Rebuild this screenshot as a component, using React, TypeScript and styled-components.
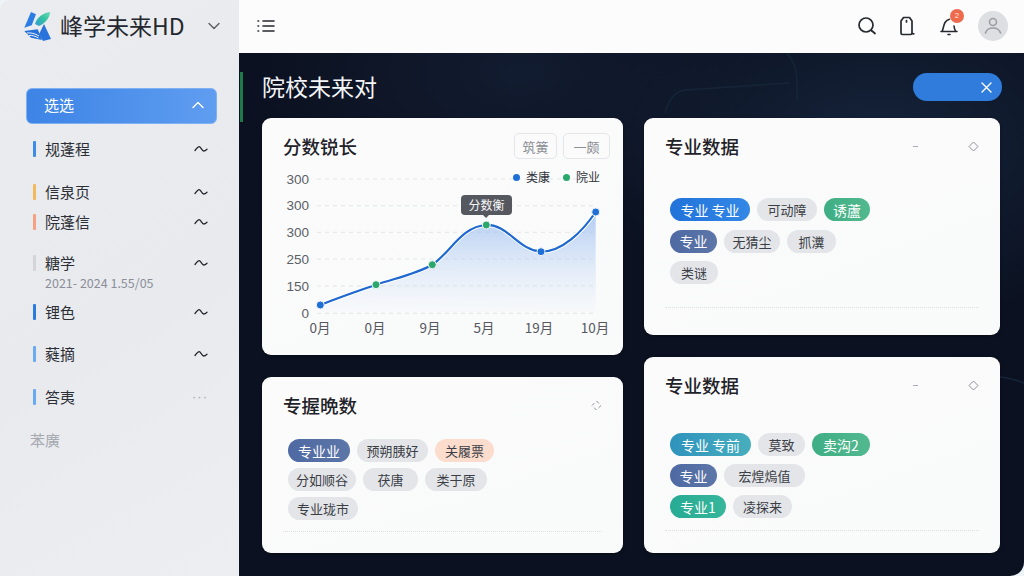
import * as React from "react";
import styled, { createGlobalStyle } from "styled-components";

const GlobalStyle = createGlobalStyle`
  html, body {
    margin: 0;
    width: 1024px;
    height: 576px;
    overflow: hidden;
    background: #eef3f8;
    font-family: "Noto Sans CJK SC", "Noto Sans", sans-serif;
  }
`;

const Shell = styled.div`
  width: 1024px;
  height: 576px;
  display: flex;
  overflow: hidden;
  border-radius: 10px 0 14px 0;
`;

const Sidebar = styled.aside`
  width: 239px;
  flex: none;
  display: flex;
  flex-direction: column;
  background: linear-gradient(150deg, #ebecf0 0%, #e8eaee 55%, #eceef2 100%);
`;

const Brand = styled.div`
  height: 52px;
  display: flex;
  align-items: center;
  padding: 0 18px 0 22px;
`;

const BrandName = styled.span`
  margin: -2px 0 0 6px;
  font-size: 23px;
  line-height: 28px;
  color: #24272e;
  white-space: nowrap;
  flex: 1;
`;

const Nav = styled.nav`
  margin-top: 36px;
  padding: 0 22px 0 26px;
  display: flex;
  flex-direction: column;
`;

const ActiveItem = styled.div`
  height: 36px;
  box-sizing: border-box;
  display: flex;
  align-items: center;
  justify-content: space-between;
  padding: 0 11px 3px 17px;
  border-radius: 6px;
  border: 1px solid #7fb0f2;
  background: linear-gradient(90deg, #3d84e6 0%, #5f9df0 100%);
  color: #ffffff;
  font-size: 15px;
`;

const NavRow = styled.div<{ $top: number }>`
  height: 24px;
  margin: ${(p) => p.$top}px 0 0 7px;
  padding-right: 9px;
  display: flex;
  align-items: center;
  font-size: 15px;
  color: #2c2f36;
`;

const Marker = styled.i<{ $color: string }>`
  width: 3px;
  height: 16px;
  margin-right: 9px;
  border-radius: 1px;
  background: ${(p) => p.$color};
`;

const NavLabel = styled.span`
  flex: 1;
  margin-top: -2px;
`;

const NavSub = styled.div`
  height: 16px;
  margin-left: 19px;
  font-size: 12.5px;
  line-height: 16px;
  color: #8b8e98;
  white-space: nowrap;
`;

const NavMuted = styled.div`
  height: 24px;
  margin: 20px 0 0 4px;
  font-size: 15px;
  line-height: 22px;
  color: #a6a9b0;
`;

const Dots = styled.span`
  font-family: "Liberation Sans", sans-serif;
  font-size: 13px;
  letter-spacing: 1px;
  line-height: 10px;
  color: #a2a5ac;
`;

const Right = styled.div`
  flex: 1;
  min-width: 0;
  display: flex;
  flex-direction: column;
`;

const Topbar = styled.header`
  height: 53px;
  flex: none;
  box-sizing: border-box;
  display: flex;
  align-items: center;
  padding: 0 16px 1px 18px;
  background: #fcfcfc;
`;

const TopActions = styled.div`
  margin-left: auto;
  display: flex;
  align-items: center;
  gap: 21px;
`;

const BellWrap = styled.span`
  position: relative;
  display: flex;
  margin-left: 3px;
`;

const Badge = styled.i`
  position: absolute;
  top: -7px;
  left: 10px;
  width: 14px;
  height: 14px;
  border-radius: 50%;
  background: #ee6a4d;
  color: #fde3da;
  font: 8px/14px "Liberation Sans", sans-serif;
  text-align: center;
`;

const Avatar = styled.span`
  width: 30px;
  height: 30px;
  margin-left: -1px;
  border-radius: 50%;
  display: flex;
  align-items: center;
  justify-content: center;
  background: #dedfe3;
`;

const Main = styled.main`
  position: relative;
  flex: 1;
  min-height: 0;
  overflow: hidden;
  box-sizing: border-box;
  padding: 20px 23px 0;
  background:
    radial-gradient(ellipse 300px 180px at 640px 90px, #15233a 0%, rgba(21, 35, 58, 0) 100%),
    radial-gradient(ellipse 260px 150px at 280px 20px, #121c30 0%, rgba(18, 28, 48, 0) 100%),
    #0b1120;
`;

const AccentBar = styled.i`
  position: absolute;
  left: 1px;
  top: 19px;
  width: 3px;
  height: 50px;
  background: #1d7a4b;
`;

const Backdrop = styled.svg`
  position: absolute;
  left: 0;
  top: 0;
  pointer-events: none;
`;

const PageHead = styled.div`
  position: relative;
  height: 30px;
  margin-bottom: 15px;
  display: flex;
  align-items: center;
  justify-content: space-between;
`;

const PageTitle = styled.h1`
  margin: -4px 0 0;
  font-size: 23px;
  font-weight: 400;
  color: #f2f4f7;
`;

const BluePill = styled.button`
  width: 89px;
  height: 28px;
  margin: -2px -1px 0 0;
  padding: 0 10px 0 0;
  border: 0;
  border-radius: 14px;
  display: flex;
  align-items: center;
  justify-content: flex-end;
  background: #2f7cdd;
`;

const Board = styled.div`
  position: relative;
  display: grid;
  grid-template-columns: 361px 356px;
  column-gap: 21px;
`;

const Column = styled.div`
  display: flex;
  flex-direction: column;
  gap: 22px;
`;

const Card = styled.section<{ $height: number }>`
  height: ${(p) => p.$height}px;
  box-sizing: border-box;
  padding: 0 21px;
  display: flex;
  flex-direction: column;
  border-radius: 9px;
  background: linear-gradient(160deg, #fbfbfc 0%, #f9fafa 100%);
  box-shadow: 0 1px 3px rgba(0, 0, 0, 0.35);
`;

const CardHead = styled.div`
  height: 28px;
  padding-top: 14px;
  flex: none;
  display: flex;
  align-items: center;
`;

const CardTitle = styled.h2`
  margin: -1px auto 0 0;
  font-size: 18.5px;
  font-weight: 500;
  line-height: 28px;
  color: #1f2228;
`;

const GhostButtons = styled.div`
  display: flex;
  gap: 6px;
  margin-right: -8px;
`;

const GhostButton = styled.button<{ $width: number }>`
  width: ${(p) => p.$width}px;
  height: 26px;
  padding: 0;
  border: 1px solid #e4e6ea;
  border-radius: 5px;
  background: #fbfbfc;
  font: inherit;
  font-size: 13px;
  color: #8b8e94;
`;

const Dash = styled.i`
  width: 5px;
  height: 1px;
  margin-right: 50px;
  background: #a9acb2;
`;

const Chart = styled.div`
  position: relative;
  width: 340px;
  height: 172px;
  margin: 8px 0 0 -11px;
`;

const Legend = styled.div`
  position: absolute;
  top: 0;
  left: 241px;
  display: flex;
  gap: 13px;
  font-size: 12px;
  line-height: 18px;
  color: #33363c;
`;

const LegendItem = styled.span<{ $color: string }>`
  display: flex;
  align-items: center;
  gap: 6px;
  &::before {
    content: "";
    width: 7px;
    height: 7px;
    border-radius: 50%;
    background: ${(p) => p.$color};
  }
`;

const Tooltip = styled.div`
  position: absolute;
  left: 189px;
  top: 27px;
  width: 51px;
  height: 20px;
  border-radius: 4px;
  background: #55585f;
  color: #f5f5f6;
  font-size: 12px;
  line-height: 20px;
  text-align: center;
  &::after {
    content: "";
    position: absolute;
    left: 22px;
    bottom: -3px;
    border: 3px solid transparent;
    border-bottom: 0;
    border-top-color: #55585f;
  }
`;

const Tags = styled.div<{ $top: number; $gap: number }>`
  margin: ${(p) => p.$top}px 0 0 5px;
  display: flex;
  flex-direction: column;
  gap: ${(p) => p.$gap}px;
`;

const TagRow = styled.div`
  display: flex;
  gap: 7px;
`;

type Tone = "blue" | "slate" | "green" | "teal" | "mint" | "peach" | "gray";

const toneBg: Record<Tone, string> = {
  blue: "linear-gradient(90deg, #2273da, #3388e6)",
  slate: "linear-gradient(90deg, #4f6aa3, #5c76a8)",
  green: "linear-gradient(90deg, #3fae84, #52b98f)",
  teal: "linear-gradient(90deg, #2f93bd, #47aebd)",
  mint: "linear-gradient(90deg, #27ab94, #37b69b)",
  peach: "#fbdccd",
  gray: "#e3e5e9",
};

const Tag = styled.span<{ $tone: Tone; $width: number }>`
  width: ${(p) => p.$width}px;
  height: 23px;
  border-radius: 12px;
  display: flex;
  align-items: center;
  justify-content: center;
  white-space: nowrap;
  font-size: ${(p) => (p.$tone === "gray" || p.$tone === "peach" ? 13 : 14)}px;
  background: ${(p) => toneBg[p.$tone]};
  color: ${(p) => (p.$tone === "gray" || p.$tone === "peach" ? "#3b3e45" : "#ffffff")};
`;

const Rule = styled.hr<{ $bottom: number }>`
  width: 100%;
  margin: auto 0 ${(p) => p.$bottom}px;
  border: 0;
  border-top: 1px dotted #dcdee2;
`;

const NextTitle = styled.div<{ $inset: number; $color: string }>`
  height: 24px;
  margin: -4px 0 0 ${(p) => p.$inset}px;
  font-size: 18px;
  font-weight: 500;
  color: ${(p) => p.$color};
`;

const Caret = () => (
  <svg width="14" height="10" viewBox="0 0 14 10" fill="none" stroke="#25282e" strokeWidth="1.3" strokeLinecap="round">
    <path d="M1 6.500C2.500 4.500 4 2.600 5.200 2.600 6.600 2.600 8 7 9.600 7 10.800 7 12 6.200 13 5.200" />
  </svg>
);

const Chevron = ({ up, color }: { up?: boolean; color: string }) => (
  <svg width="14" height="8" viewBox="0 0 14 8" fill="none" stroke={color} strokeWidth="1.4" strokeLinecap="round" strokeLinejoin="round">
    <path d={up ? "M2 6.500 7 1.500l5 5" : "M2 1.500l5 5 5-5"} />
  </svg>
);

const Logo = () => (
  <svg width="32" height="32" viewBox="0 -1 32 32">
    <defs>
      <linearGradient id="leafFill" x1="0" y1="1" x2="1" y2="0">
        <stop offset="0" stopColor="#2f9bd8" />
        <stop offset="0.55" stopColor="#35c2a0" />
        <stop offset="1" stopColor="#6bdcb8" />
      </linearGradient>
    </defs>
    <path d="M9 1 14 3.300 9.700 14.300 2.300 16.700Z" fill="#2b7de4" />
    <path d="M13 13C15 6 21 2 28 1 28 6 24 12 17 15Z" fill="url(#leafFill)" />
    <path d="M22 13 29 28 21 30 17 23.300Z" fill="#2a73dc" />
    <path d="M2.300 20 15.700 18.300 20 29 9 26.700Z" fill="#2470d8" />
    <path d="M5 22C9 21.500 13 22.500 17 25M7 24.500C10 24 13 25 16.500 27" fill="none" stroke="#eef3fb" strokeWidth="1" />
  </svg>
);

const ListIcon = () => (
  <svg width="18" height="14" viewBox="0 0 18 14" fill="none" stroke="#26292f" strokeWidth="1.6" strokeLinecap="round">
    <path d="M6 2h11M6 7h11M6 12h11M1 2h.6M1 7h.6M1 12h.6" />
  </svg>
);

const SearchIcon = () => (
  <svg width="20" height="20" viewBox="0 0 20 20" fill="none" stroke="#26292f" strokeWidth="1.7" strokeLinecap="round">
    <circle cx="9" cy="9" r="7" />
    <path d="M14.500 14.500l3.500 3" />
  </svg>
);

const TagIcon = () => (
  <svg width="18" height="20" viewBox="0 0 18 20" fill="none" stroke="#26292f" strokeWidth="1.7" strokeLinecap="round" strokeLinejoin="round">
    <path d="M5.500 1.500h6L14 5v12c0 .9-.5 1.500-1.500 1.500h-8C3.500 18.500 3 18 3 17V5Z" />
    <path d="M8.500 4.500v1.500M14 17.500l1.800.3" />
  </svg>
);

const BellIcon = () => (
  <svg width="18" height="20" viewBox="0 0 18 20" fill="none" stroke="#26292f" strokeWidth="1.6" strokeLinecap="round" strokeLinejoin="round">
    <path d="M1 15.500h16M2 15.500C3.500 12.500 3.500 9 5 6.500 6 4.800 7.500 3.500 9.500 3.200M14 10c.2 2 .8 4 1.800 5.500" />
    <path d="M8 18.500h2" />
  </svg>
);

const UserIcon = () => (
  <svg width="20" height="20" viewBox="0 0 20 20" fill="none" stroke="#9b9ea5" strokeWidth="1.6" strokeLinecap="round">
    <circle cx="10" cy="6" r="3.500" />
    <path d="M2.500 17c1-3.500 4-5 7.500-5s6.500 1.500 7.500 5" />
  </svg>
);

const CloseIcon = () => (
  <svg width="11" height="11" viewBox="0 0 11 11" stroke="#ffffff" strokeWidth="1.4" strokeLinecap="round">
    <path d="M1 1l9 9M10 1l-9 9" />
  </svg>
);

const DiamondIcon = ({ broken }: { broken?: boolean }) => (
  <svg width="11" height="11" viewBox="0 0 11 11" fill="none" stroke="#8d9097" strokeWidth="1">
    <path d="M5.500 1 10 5.500 5.500 10 1 5.500Z" strokeDasharray={broken ? "3.500 2.800" : undefined} />
  </svg>
);

const navRows = [
  { label: "规蓬程", color: "#3f8be8", top: 13 },
  { label: "信泉页", color: "#f2b95e", top: 19 },
  { label: "院蓬信", color: "#f5a282", top: 6 },
  { label: "糖学", color: "#d3d5d9", top: 17, sub: "2021- 2024 1.55/05" },
  { label: "锂色", color: "#2a7bdc", top: 9 },
  { label: "蕤摘", color: "#6aaaf2", top: 18 },
  { label: "答夷", color: "#6aaaf2", top: 19, dots: true },
];

const yTicks = [
  { y: 179, label: "300" },
  { y: 205.7, label: "300" },
  { y: 232.3, label: "300" },
  { y: 259, label: "250" },
  { y: 286, label: "150" },
  { y: 313.3, label: "0" },
];

const xTicks = [
  { x: 320, label: "0月" },
  { x: 375, label: "0月" },
  { x: 430, label: "9月" },
  { x: 484, label: "5月" },
  { x: 539, label: "19月" },
  { x: 595, label: "10月" },
];

const points = [
  { x: 320.3, y: 305, color: "#1f6fd8" },
  { x: 376, y: 284.7, color: "#2aa76b" },
  { x: 432.3, y: 264.7, color: "#2aa76b" },
  { x: 486.3, y: 225, color: "#2aa76b" },
  { x: 541, y: 251.7, color: "#1f6fd8" },
  { x: 595.7, y: 212, color: "#1f6fd8" },
];

const linePath =
  "M320.300 305C340 297 358 291 376 284.700C396 278 416 274 432.300 264.700C450 253 462 226 486.300 225C508 224 518 250 541 251.700C562 252 582 232 595.700 212";

type TagData = { label: string; tone: Tone; width: number };

const chartTags: TagData[][] = [
  [
    { label: "专业业", tone: "slate", width: 62 },
    { label: "预朔胰好", tone: "gray", width: 71 },
    { label: "关履票", tone: "peach", width: 59 },
  ],
  [
    { label: "分如顺谷", tone: "gray", width: 68 },
    { label: "茯唐", tone: "gray", width: 55 },
    { label: "类于原", tone: "gray", width: 62 },
  ],
  [{ label: "专业珑市", tone: "gray", width: 70 }],
];

const majorTags: TagData[][] = [
  [
    { label: "专业 专业", tone: "blue", width: 80 },
    { label: "可动障", tone: "gray", width: 60 },
    { label: "诱蘆", tone: "green", width: 46 },
  ],
  [
    { label: "专业", tone: "slate", width: 47 },
    { label: "无猜尘", tone: "gray", width: 56 },
    { label: "抓瀵", tone: "gray", width: 49 },
  ],
  [{ label: "类谜", tone: "gray", width: 48 }],
];

const majorTagsAlt: TagData[][] = [
  [
    { label: "专业 专前", tone: "teal", width: 81 },
    { label: "莫致", tone: "gray", width: 47 },
    { label: "卖沟2", tone: "green", width: 58 },
  ],
  [
    { label: "专业", tone: "slate", width: 47 },
    { label: "宏煌熓值", tone: "gray", width: 81 },
  ],
  [
    { label: "专业1", tone: "mint", width: 56 },
    { label: "凌探来", tone: "gray", width: 59 },
  ],
];

function TagList({ rows, top, gap }: { rows: TagData[][]; top: number; gap: number }) {
  return (
    <Tags $top={top} $gap={gap}>
      {rows.map((row, i) => (
        <TagRow key={i}>
          {row.map((t) => (
            <Tag key={t.label} $tone={t.tone} $width={t.width}>
              {t.label}
            </Tag>
          ))}
        </TagRow>
      ))}
    </Tags>
  );
}

function ScoreChart() {
  return (
    <Chart>
      <svg width="340" height="172" viewBox="272 168 340 172">
        <defs>
          <linearGradient id="scoreFill" x1="0" y1="0" x2="0" y2="1">
            <stop offset="0" stopColor="#8fb6ee" stopOpacity="0.7" />
            <stop offset="1" stopColor="#cfe0f8" stopOpacity="0.05" />
          </linearGradient>
        </defs>
        {yTicks.map((t, i) => (
          <g key={i}>
            <line x1="317" x2="595" y1={t.y} y2={t.y} stroke="#e3e5e8" strokeDasharray="4 4" />
            <text
              x="309"
              y={t.y + 4.5}
              textAnchor="end"
              fontSize="13.5"
              fill="#5c5f66"
              fontFamily="Liberation Sans, sans-serif"
            >
              {t.label}
            </text>
          </g>
        ))}
        <path d={`${linePath}L595.700 313H320.300Z`} fill="url(#scoreFill)" />
        <path d={linePath} fill="none" stroke="#ffffff" strokeWidth="4" />
        <path d={linePath} fill="none" stroke="#1f68cf" strokeWidth="2.200" />
        {points.map((p, i) => (
          <circle key={i} cx={p.x} cy={p.y} r="4" fill={p.color} stroke="#f3f5f9" strokeWidth="1" />
        ))}
        {xTicks.map((t, i) => (
          <text key={i} x={t.x} y="333" textAnchor="middle" fontSize="13.5" fill="#55585f" fontFamily="Noto Sans CJK SC, sans-serif">
            {t.label}
          </text>
        ))}
      </svg>
      <Legend>
        <LegendItem $color="#1f6fd8">类康</LegendItem>
        <LegendItem $color="#2aa76b">院业</LegendItem>
      </Legend>
      <Tooltip>分数衡</Tooltip>
    </Chart>
  );
}

export default function App() {
  return (
    <Shell>
      <GlobalStyle />
      <Sidebar>
        <Brand>
          <Logo />
          <BrandName>峰学未来HD</BrandName>
          <Chevron color="#5a5d64" />
        </Brand>
        <Nav>
          <ActiveItem>
            选选
            <Chevron up color="#ffffff" />
          </ActiveItem>
          {navRows.map((row) => (
            <React.Fragment key={row.label}>
              <NavRow $top={row.top}>
                <Marker $color={row.color} />
                <NavLabel>{row.label}</NavLabel>
                {row.dots ? <Dots>···</Dots> : <Caret />}
              </NavRow>
              {row.sub && <NavSub>{row.sub}</NavSub>}
            </React.Fragment>
          ))}
          <NavMuted>苯廣</NavMuted>
        </Nav>
      </Sidebar>
      <Right>
        <Topbar>
          <ListIcon />
          <TopActions>
            <SearchIcon />
            <TagIcon />
            <BellWrap>
              <BellIcon />
              <Badge>2</Badge>
            </BellWrap>
            <Avatar>
              <UserIcon />
            </Avatar>
          </TopActions>
        </Topbar>
        <Main>
          <Backdrop width="785" height="523" viewBox="0 0 785 523" fill="none" stroke="#16243a" strokeWidth="1.500">
            <path d="M548 0C555 8 558 16 558 30V47M426 60C430 46 436 38 446 37L551 30" />
            <path d="M785 330C760 320 740 322 700 332" />
          </Backdrop>
          <AccentBar />
          <PageHead>
            <PageTitle>院校未来对</PageTitle>
            <BluePill aria-label="关闭">
              <CloseIcon />
            </BluePill>
          </PageHead>
          <Board>
            <Column>
              <Card $height={237}>
                <CardHead>
                  <CardTitle>分数锐长</CardTitle>
                  <GhostButtons>
                    <GhostButton $width={43}>筑簧</GhostButton>
                    <GhostButton $width={47}>一颇</GhostButton>
                  </GhostButtons>
                </CardHead>
                <ScoreChart />
              </Card>
              <Card $height={176}>
                <CardHead>
                  <CardTitle>专握晩数</CardTitle>
                  <DiamondIcon broken />
                </CardHead>
                <TagList rows={chartTags} top={20} gap={6} />
                <Rule $bottom={21} />
              </Card>
              <NextTitle $inset={-19} $color="#6fa8e8">专业数据分析</NextTitle>
            </Column>
            <Column>
              <Card $height={217}>
                <CardHead>
                  <CardTitle>专业数据</CardTitle>
                  <Dash />
                  <DiamondIcon />
                </CardHead>
                <TagList rows={majorTags} top={38} gap={8.5} />
                <Rule $bottom={27} />
              </Card>
              <Card $height={196}>
                <CardHead>
                  <CardTitle>专业数据</CardTitle>
                  <Dash />
                  <DiamondIcon />
                </CardHead>
                <TagList rows={majorTagsAlt} top={34} gap={8} />
                <Rule $bottom={22} />
              </Card>
              <NextTitle $inset={6} $color="#f2f4f7">专业数据</NextTitle>
            </Column>
          </Board>
        </Main>
      </Right>
    </Shell>
  );
}
